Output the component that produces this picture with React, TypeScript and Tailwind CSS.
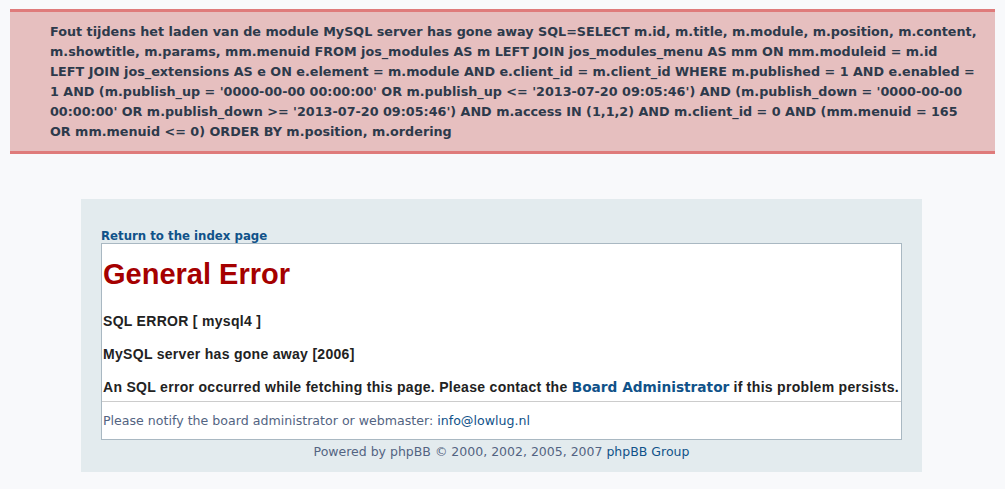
export default function App() {
  return (
    <div className="min-h-[489px] bg-[#f8f9fb] pt-[9px] font-['DejaVu_Sans',Verdana,sans-serif]">
      <div className="mx-[10px] border-y-[3px] border-[#df7b7b] bg-[#e6bfbf] pt-[10px] pb-[9px] pl-[40px] pr-[4px]">
        <p className="text-[12.75px] leading-[20px] font-bold text-[#2d3a4b]">
          Fout tijdens het laden van de module MySQL server has gone away SQL=SELECT m.id, m.title, m.module, m.position, m.content,
          <br />
          m.showtitle, m.params, mm.menuid FROM jos_modules AS m LEFT JOIN jos_modules_menu AS mm ON mm.moduleid = m.id
          <br />
          LEFT JOIN jos_extensions AS e ON e.element = m.module AND e.client_id = m.client_id WHERE m.published = 1 AND e.enabled =
          <br />
          1 AND (m.publish_up = '0000-00-00 00:00:00' OR m.publish_up &lt;= '2013-07-20 09:05:46') AND (m.publish_down = '0000-00-00
          <br />
          00:00:00' OR m.publish_down &gt;= '2013-07-20 09:05:46') AND m.access IN (1,1,2) AND m.client_id = 0 AND (mm.menuid = 165
          <br />
          OR mm.menuid &lt;= 0) ORDER BY m.position, m.ordering
        </p>
      </div>

      <div className="mx-[81px] mt-[45px] w-[841px] bg-[#e3ebee] px-[20px] pt-[30px] pb-[12px]">
        <a href="#" className="block text-[11.75px] leading-[14px] font-bold text-[#105289]">
          Return to the index page
        </a>
        <div className="border border-[#a9b8c2] bg-white">
          <div className="px-[1px] pb-[5px] font-['Liberation_Sans',Arial,sans-serif]">
            <h1 className="pt-[13px] text-[29px] leading-[34px] font-bold text-[#a50000]">General Error</h1>
            <p className="mt-[22px] text-[14px] leading-[17px] font-bold tracking-[0.3px] text-[#222]">SQL ERROR [ mysql4 ]</p>
            <p className="mt-[16px] text-[14px] leading-[17px] font-bold tracking-[0.3px] text-[#222]">MySQL server has gone away [2006]</p>
            <p className="mt-[16px] text-[14px] leading-[17px] font-bold tracking-[0.3px] text-[#222]">
              An SQL error occurred while fetching this page. Please contact the{" "}
              <a href="#" className="font-['DejaVu_Sans',Verdana,sans-serif] text-[13.7px] tracking-normal text-[#105289]">Board Administrator</a> if this problem persists.
            </p>
          </div>
          <div className="border-t border-[#cccccc] px-[1px] pt-[11px] pb-[10px] text-[12.6px] leading-[16px] text-[#536482]">
            Please notify the board administrator or webmaster: <a href="#" className="text-[#105289]">info@lowlug.nl</a>
          </div>
        </div>
        <p className="pt-[4px] text-center text-[12.5px] leading-[16px] text-[#536482]">
          Powered by phpBB © 2000, 2002, 2005, 2007 <a href="#" className="text-[#105289]">phpBB Group</a>
        </p>
      </div>
    </div>
  );
}
